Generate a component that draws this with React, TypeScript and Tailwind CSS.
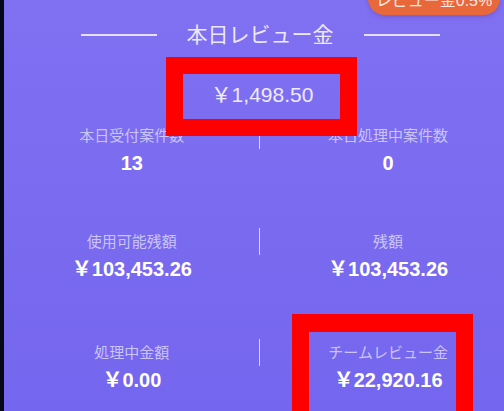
import React from 'react';

interface Stat {
  label: string;
  value: string;
}

const rows: { left: Stat; right: Stat; mt: string }[] = [
  { left: { label: '本日受付案件数', value: '13' }, right: { label: '本日処理中案件数', value: '0' }, mt: 'mt-[16px]' },
  { left: { label: '使用可能残額', value: '￥103,453.26' }, right: { label: '残額', value: '￥103,453.26' }, mt: 'mt-[56px]' },
  { left: { label: '処理中金額', value: '￥0.00' }, right: { label: 'チームレビュー金', value: '￥22,920.16' }, mt: 'mt-[61px]' },
];

const Cell: React.FC<{ stat: Stat }> = ({ stat }) => (
  <div className="w-[256px] flex flex-col items-center">
    <div className="h-[20px] leading-[20px] text-[15px] text-[#cbc4f8]">{stat.label}</div>
    <div className="mt-[4px] h-[26px] leading-[26px] text-[20px] font-bold text-white">{stat.value}</div>
  </div>
);

const App: React.FC = () => {
  return (
    <div className="w-[504px] h-[411px] flex overflow-hidden font-['Liberation_Sans','Noto_Sans_CJK_JP',sans-serif]">
      <div className="w-[4px] bg-[#07071a]" />
      <div className="relative flex-1 overflow-hidden bg-gradient-to-b from-[#8070f2] to-[#7466ee]">
        {/* rate badge */}
        <div className="absolute top-[-18px] right-[4px] w-[132px] h-[33px] rounded-full bg-[#e8673b] shadow-[0_2px_4px_rgba(80,40,120,0.25)] flex items-end justify-center pb-[6px]">
          <span className="text-[16px] leading-[16px] text-[#fbe9e2]">レビュー金0.5%</span>
        </div>

        <div className="w-[512px]">
          <div className="mt-[20px] h-[30px] flex items-center justify-center gap-[30px]">
            <div className="w-[76px] h-[1.5px] bg-[#e4e0fb]" />
            <div className="text-[21px] leading-[30px] text-[#ebe8fc]">本日レビュー金</div>
            <div className="w-[76px] h-[1.5px] bg-[#e4e0fb]" />
          </div>

          <div className="mt-[30px] h-[30px] flex items-center justify-center pl-[4px]">
            <span className="text-[21px] leading-[30px] text-[#eeebfd]">￥1,498.50</span>
          </div>

          {rows.map((row, i) => (
            <div key={i} className={`${row.mt} flex`}>
              <Cell stat={row.left} />
              <div className="-mt-[4px] w-[1.5px] h-[27px] bg-[#dcd7fa] -ml-[1px]" />
              <Cell stat={row.right} />
            </div>
          ))}
        </div>

        {/* annotation boxes */}
        <div className="absolute left-[162px] top-[57px] w-[191px] h-[79px] border-[17px] border-[#ff0000]" />
        <div className="absolute left-[288px] top-[314px] w-[181px] h-[120px] border-[17px] border-t-[18px] border-[#ff0000]" />
      </div>
    </div>
  );
};

export default App;
